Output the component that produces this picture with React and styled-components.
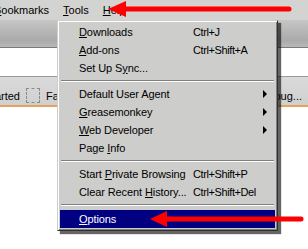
import React from 'react';
import styled, { createGlobalStyle } from 'styled-components';

const Global = createGlobalStyle`
  html, body { margin: 0; padding: 0; background: #fff; }
  body { font-family: "Liberation Sans", Arial, sans-serif; font-size: 11px; color: #000; }
`;

const Frame = styled.div`
  position: relative;
  width: 308px;
  height: 249px;
  overflow: hidden;
  background: #fff;
  display: flex;
  flex-direction: column;
`;

const MenuBar = styled.div`
  height: 20px;
  display: flex;
  align-items: center;
  background: #d3d3d1;
`;

const BarItem = styled.div`
  height: 17px;
  line-height: 17px;
  padding: 0 ${p => (p.$open ? '7px' : '6px')};
  border: 1px solid ${p => (p.$open ? '#7a7a7a #fff #fff #7a7a7a' : 'transparent')};
  margin-left: ${p => (p.$first ? '-13px' : '0')};
  white-space: nowrap;
`;

const Key = styled.span`
  text-decoration: underline;
`;

const NavBar = styled.div`
  height: 27px;
  background: linear-gradient(#c6c6c6, #aaaaaa 75%, #b9b9b9);
  border-bottom: 1px solid #7a7a7a;
`;

const AddressRow = styled.div`
  height: 28px;
  background: #fff;
  border-bottom: 1px solid #9a9a9a;
`;

const BookmarksBar = styled.div`
  height: 30px;
  display: flex;
  align-items: center;
  padding-top: 9px;
  box-sizing: border-box;
  background: linear-gradient(#dadada, #d0d0d0);
  border-bottom: 2px solid #e3a35c;
  white-space: nowrap;
`;

const Bookmark = styled.div`
  display: flex;
  align-items: center;
  gap: 6px;
  margin-left: ${p => p.$offset || '0'};
  margin-right: ${p => p.$right || '0'};
`;

const FavIcon = styled.span`
  width: 12px;
  height: 13px;
  border: 1px dashed #8a8a8a;
`;

const Spacer = styled.div`
  flex: 1;
`;

const Menu = styled.div`
  position: absolute;
  left: 57px;
  top: 20px;
  width: 215px;
  padding: 2px;
  background: #cdcdcb;
  border: 1px solid;
  border-color: #cdcdcb #303030 #303030 #cdcdcb;
  box-shadow: inset 1px 1px #fff, inset -1px -1px #808080, 3px 3px 1px rgba(0, 0, 0, 0.6);
`;

const Item = styled.div`
  height: 18px;
  display: grid;
  grid-template-columns: 114px 1fr 12px;
  align-items: center;
  padding-left: 19px;
  margin: ${p => (p.$active ? '1px 0 0' : '0')};
  background: ${p => (p.$active ? '#000080' : 'transparent')};
  color: ${p => (p.$active ? '#fff' : '#000')};
  white-space: nowrap;
`;

const Label = styled.span`
  letter-spacing: -0.1px;
`;

const Shortcut = styled.span`
  letter-spacing: -0.4px;
`;

const SubArrow = styled.span`
  width: 0;
  height: 0;
  border-top: 4px solid transparent;
  border-bottom: 4px solid transparent;
  border-left: 4px solid #000;
`;

const Separator = styled.div`
  height: 8px;
  display: flex;
  align-items: center;
  &::after {
    content: '';
    flex: 1;
    margin: 0 1px;
    border-top: 1px solid #808080;
    border-bottom: 1px solid #fff;
  }
`;

const Annotations = styled.svg`
  position: absolute;
  left: 0;
  top: 0;
  pointer-events: none;
`;

const MenuEntry = ({ label, shortcut, sub, active }) => (
  <Item $active={active}>
    <Label>{label}</Label>
    <Shortcut>{shortcut}</Shortcut>
    {sub ? <SubArrow /> : <span />}
  </Item>
);

const App = () => (
  <Frame>
    <Global />
    <MenuBar>
      <BarItem $first><Key>B</Key>ookmarks</BarItem>
      <BarItem $open><Key>T</Key>ools</BarItem>
      <BarItem><Key>H</Key>elp</BarItem>
    </MenuBar>
    <NavBar />
    <AddressRow />
    <BookmarksBar>
      <Bookmark $offset="-54px">Getting Started</Bookmark>
      <Bookmark $offset="6px"><FavIcon />Fa</Bookmark>
      <Spacer />
      <Bookmark $right="6px">Walkthroug...</Bookmark>
    </BookmarksBar>

    <Menu>
      <MenuEntry label={<><Key>D</Key>ownloads</>} shortcut="Ctrl+J" />
      <MenuEntry label={<><Key>A</Key>dd-ons</>} shortcut="Ctrl+Shift+A" />
      <MenuEntry label={<>Set Up S<Key>y</Key>nc...</>} />
      <Separator />
      <MenuEntry label="Default User Agent" sub />
      <MenuEntry label={<><Key>G</Key>reasemonkey</>} sub />
      <MenuEntry label={<><Key>W</Key>eb Developer</>} sub />
      <MenuEntry label={<>Page <Key>I</Key>nfo</>} />
      <Separator />
      <MenuEntry label={<>Start <Key>P</Key>rivate Browsing</>} shortcut="Ctrl+Shift+P" />
      <MenuEntry label={<>Clear Recent <Key>H</Key>istory...</>} shortcut="Ctrl+Shift+Del" />
      <Separator />
      <MenuEntry label={<><Key>O</Key>ptions</>} active />
    </Menu>

    <Annotations width="308" height="249" viewBox="0 0 308 249">
      <line x1="120" y1="9" x2="289" y2="9" stroke="#f00" strokeWidth="5" strokeLinecap="round" />
      <polygon points="108,9 126,1 126,17" fill="#f00" />
      <line x1="162" y1="219" x2="301" y2="219" stroke="#f00" strokeWidth="5" strokeLinecap="round" />
      <polygon points="150,219 167,211 167,227" fill="#f00" />
    </Annotations>
  </Frame>
);

export default App;
